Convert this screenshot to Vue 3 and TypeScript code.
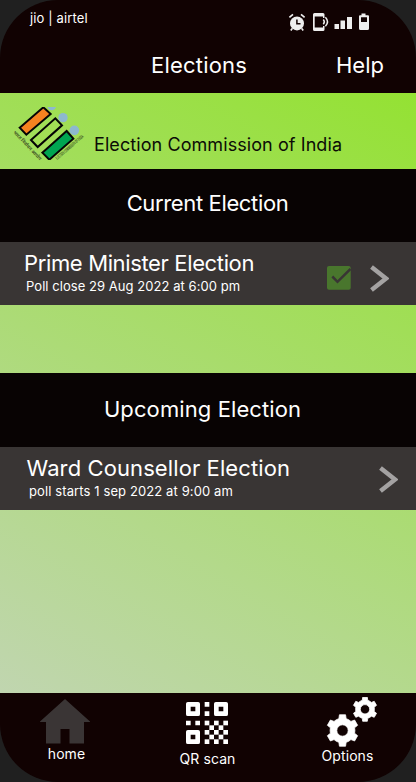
<script setup lang="ts">
interface Poll {
  heading: string
  title: string
  note: string
  voted: boolean
  key: string
}

const polls: Poll[] = [
  {
    key: 'current',
    heading: 'Current Election',
    title: 'Prime Minister Election',
    note: 'Poll close 29 Aug 2022 at 6:00 pm',
    voted: true,
  },
  {
    key: 'upcoming',
    heading: 'Upcoming Election',
    title: 'Ward Counsellor Election',
    note: 'poll starts 1 sep 2022 at 9:00 am',
    voted: false,
  },
]

const checker: { x: number; y: number }[] = []
for (let y = 4; y < 9; y++) {
  for (let x = 4; x < 9; x++) {
    if ((x + y) % 2 === 0) checker.push({ x, y })
  }
}

function gear(cx: number, cy: number, outer: number, body: number, hole: number): string {
  const points: string[] = []
  const teeth = 6
  const add = (r: number, deg: number) => {
    const a = ((deg - 90) * Math.PI) / 180
    points.push(`${(cx + r * Math.cos(a)).toFixed(2)} ${(cy + r * Math.sin(a)).toFixed(2)}`)
  }
  for (let i = 0; i < teeth; i++) {
    const mid = (i * 360) / teeth
    add(body, mid - 17)
    add(outer, mid - 11)
    add(outer, mid + 11)
    add(body, mid + 17)
    add(body, mid + 30)
  }
  return (
    `M${points.join('L')}Z` +
    `M${cx - hole} ${cy}a${hole} ${hole} 0 1 0 ${2 * hole} 0a${hole} ${hole} 0 1 0 ${-2 * hole} 0Z`
  )
}

const gears = gear(21.5, 33.5, 16, 12.4, 5.7) + gear(44, 12.3, 12.2, 9.4, 4.7)
</script>

<template>
  <div class="phone">
    <header class="top">
      <div class="status">
        <span class="carrier">jio | airtel</span>
        <svg class="status-icons" width="82" height="20" viewBox="0 0 82 20" fill="#eeeeee">
          <circle cx="9" cy="11.4" r="7" />
          <path d="M1.4 5.3 5 2.3M16.6 5.3 13 2.3M4.2 16.5 2.8 18.4M13.8 16.5l1.4 1.9" stroke="#eeeeee" stroke-width="1.7" />
          <path d="M8.9 7.4v4.4h3.6" fill="none" stroke="#120303" stroke-width="1.5" />
          <path d="M26.500 1h8.500a1.500 1.500 0 0 1 1.500 1.500V6H35V4.600h-8.300v11H35V14h1.500v3.500A1.500 1.500 0 0 1 35 19h-8.500a1.500 1.500 0 0 1-1.500-1.500v-15A1.500 1.500 0 0 1 26.500 1Z" />
          <path d="M35.300 7.500q2 2.300 0 4.700M37.400 5.300q4.200 4.500 0 9" fill="none" stroke="#eeeeee" stroke-width="1.5" />
          <path d="M46.500 12h4.500v5h-4.500zM52.500 8.500H57V17h-4.500zM59 5h5v12h-5z" />
          <path fill-rule="evenodd" d="M73.500 1.500h4V3.300H80a1 1 0 0 1 1 1V16.500a1.500 1.500 0 0 1-1.500 1.500h-7a1.500 1.500 0 0 1-1.500-1.500V4.300a1 1 0 0 1 1-1h1.500ZM73 5.300v4.800h6V5.300Z" />
        </svg>
      </div>
      <div class="title-row">
        <h1>Elections</h1>
        <span class="help">Help</span>
      </div>
    </header>

    <section class="brand">
      <svg class="logo" width="71" height="53" viewBox="0 0 213 159">
        <defs>
          <clipPath id="emblem-box"><rect width="213" height="159" /></clipPath>
        </defs>
        <g clip-path="url(#emblem-box)">
          <g fill="#8db8cf">
            <circle cx="113" cy="-3" r="13" />
            <circle cx="147" cy="32" r="14" />
            <circle cx="181" cy="70" r="14.5" />
          </g>
          <g stroke="#050505" stroke-width="6">
            <path d="M17 62 88 1 110 21 37 83Z" fill="#f58220" />
            <path d="M51 99 124 34 144 55 71 120Z" fill="#a2df55" />
            <path d="M85 137 158 72 178 95 106 158Z" fill="#00a551" />
          </g>
        </g>
        <text class="seal" transform="translate(-3 77) rotate(46.500)" textLength="115" lengthAdjust="spacingAndGlyphs">भारत निर्वाचन आयोग</text>
        <text class="seal" transform="translate(130 159) rotate(-41)" textLength="105" lengthAdjust="spacingAndGlyphs">ELECTION COMMISSION OF INDIA</text>
      </svg>
      <span class="brand-name">Election Commission of India</span>
    </section>

    <main class="polls">
      <section v-for="poll in polls" :key="poll.key" class="poll" :class="poll.key">
        <h2>{{ poll.heading }}</h2>
        <div class="row">
          <div class="row-text">
            <div class="row-title">{{ poll.title }}</div>
            <div class="row-note">{{ poll.note }}</div>
          </div>
          <svg v-if="poll.voted" class="check" width="24" height="24" viewBox="0 0 24 24">
            <rect width="23.700" height="23.700" rx="2" fill="#49762d" />
            <path d="M5.300 10.500 10.500 15.800 23.500 3" fill="none" stroke="#393534" stroke-width="2.500" />
          </svg>
          <svg class="chevron" width="19" height="27" viewBox="0 0 19 27">
            <path d="M1.500 2 16 13.500 1.500 25" fill="none" stroke="#a4a2a2" stroke-width="4.400" />
          </svg>
        </div>
      </section>
    </main>

    <nav class="tabs">
      <div class="tab home">
        <svg width="50" height="45" viewBox="0 0 50 45">
          <path d="M25 0 50.500 23H44v21.500H29.500V30h-9v14.500H6V23H-.5Z" fill="#3a3535" />
        </svg>
        <span>home</span>
      </div>
      <div class="tab scan">
        <svg width="42" height="42" viewBox="0 0 9 9" fill="#fff">
          <path fill-rule="evenodd" d="M.4 0h2.200q.4 0 .4.400v2.200q0 .4-.4.400H.4Q0 3 0 2.600V.4Q0 0 .4 0ZM1 1v1h1V1Z" />
          <path fill-rule="evenodd" d="M6.400 0h2.200q.4 0 .4.400v2.200q0 .4-.4.400H6.400Q6 3 6 2.600V.4Q6 0 6.400 0ZM7 1v1h1V1Z" />
          <path fill-rule="evenodd" d="M.4 6h2.200q.4 0 .4.400v2.200q0 .4-.4.400H.4Q0 9 0 8.600V6.400Q0 6 .4 6ZM1 7v1h1V7Z" />
          <path d="M4 0h1v1H4zM4 2h1v1H4zM0 4h1v1H0zM2 4h1v1H2z" />
          <rect v-for="c in checker" :key="`${c.x}-${c.y}`" :x="c.x" :y="c.y" width="1" height="1" />
        </svg>
        <span>QR scan</span>
      </div>
      <div class="tab options">
        <svg width="57" height="50" viewBox="0 0 57 50">
          <path :d="gears" fill="#fff" fill-rule="evenodd" stroke="#fff" stroke-width=".8" stroke-linejoin="round" />
        </svg>
        <span>Options</span>
      </div>
    </nav>
  </div>
</template>

<style>
body {
  background: #202020;
}
</style>

<style scoped>
.phone {
  display: flex;
  flex-direction: column;
  width: 416px;
  height: 782px;
  font-family: Inter, "Liberation Sans", sans-serif;
  color: #fff;
  white-space: nowrap;
}
h1,
h2 {
  margin: 0;
  font-weight: 400;
}
.top {
  height: 93px;
  border-radius: 58px 58px 0 0;
  background: #110202;
}
.status {
  display: flex;
  justify-content: space-between;
  height: 40px;
  padding: 0 46px 0 30px;
}
.carrier {
  margin-top: 10px;
  font-size: 13px;
  letter-spacing: 0.13px;
  line-height: 16px;
}
.status-icons {
  margin-top: 12px;
}
.title-row {
  display: grid;
  grid-template-columns: 185px 1fr;
  padding-left: 151px;
  font-size: 22px;
  line-height: 50px;
}
h1 {
  font-size: 22px;
  letter-spacing: 0.2px;
}
.brand,
.polls {
  background-image: linear-gradient(209deg, #8fe325 0%, #c5d4bd 100%);
  background-size: 416px 782px;
}
.brand {
  display: flex;
  align-items: flex-start;
  height: 76px;
  padding-left: 14px;
  background-position: 0 -93px;
  color: #0c0c06;
}
.logo {
  flex: none;
  margin-top: 14px;
  overflow: visible;
}
.seal {
  font-family: "Noto Sans", Inter, sans-serif;
  font-size: 14px;
  font-weight: 600;
  fill: #34451d;
}
.brand-name {
  margin: 40px 0 0 9px;
  font-size: 18px;
  letter-spacing: 0.08px;
  line-height: 24px;
}
.polls {
  display: flex;
  flex-direction: column;
  flex: 1;
  gap: 68px;
  background-position: 0 -169px;
}
h2 {
  height: 73px;
  background: #080303;
  font-size: 22px;
  line-height: 69px;
  text-align: center;
}
.current h2,
.current .row-title {
  letter-spacing: -0.36px;
}
.current h2 {
  padding-right: 1px;
}
.upcoming h2 {
  height: 74px;
  padding-right: 11px;
  line-height: 72px;
  letter-spacing: 0.1px;
}
.row {
  display: flex;
  align-items: center;
  height: 63px;
  padding: 0 27px 0 24px;
  background: #393534;
}
.upcoming .row {
  padding: 0 18.500px 0 26.500px;
}
.row-text {
  flex: 1;
  height: 63px;
}
.row-title {
  padding-top: 8px;
  font-size: 22px;
  letter-spacing: 0.1px;
  line-height: 27px;
}
.row-note {
  padding: 1px 0 0 2px;
  font-size: 13px;
  letter-spacing: 0.05px;
  line-height: 16px;
}
.upcoming .row-note {
  padding-left: 2.500px;
  letter-spacing: 0.11px;
}
.check {
  margin: 9px 19.500px 0 0;
}
.chevron {
  margin-top: 9px;
}
.upcoming .chevron {
  margin-top: 1px;
}
.tabs {
  display: grid;
  grid-template-columns: 133px 149px 131px;
  height: 89px;
  border-radius: 0 0 58px 58px;
  background: #110202;
}
.tab {
  display: flex;
  flex-direction: column;
  align-items: center;
  font-size: 14px;
  letter-spacing: 0.08px;
  line-height: 17px;
}
.home svg {
  margin: 6px 3px 1px 0;
}
.scan svg {
  margin: 9px 2px 6px 0;
}
.options svg {
  margin: 4px 0 0 4px;
}
</style>
